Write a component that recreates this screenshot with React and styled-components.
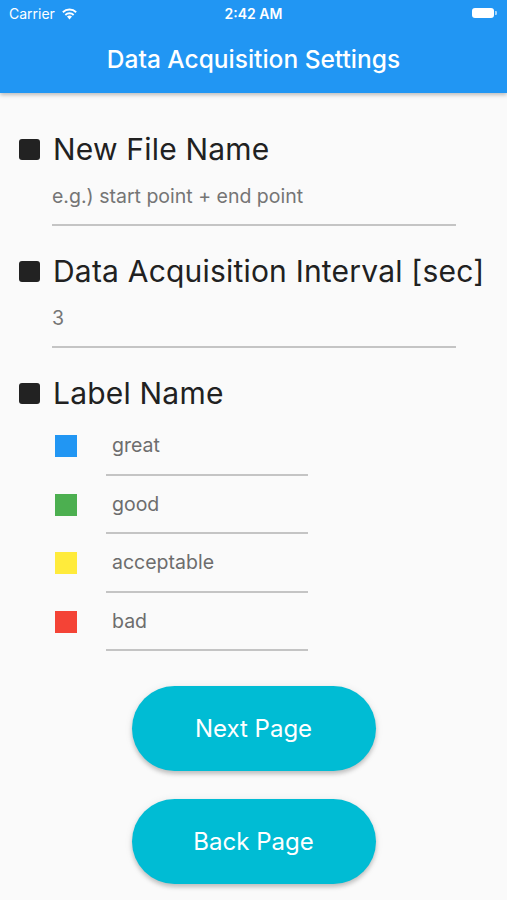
import React from "react";
import styled, { createGlobalStyle } from "styled-components";

const GlobalStyle = createGlobalStyle`
  html, body {
    margin: 0;
    padding: 0;
    background: #fafafa;
  }
  body {
    font-family: Inter, "Noto Sans", sans-serif;
    -webkit-font-smoothing: antialiased;
  }
`;

const Screen = styled.div`
  width: 507px;
  height: 900px;
  background: #fafafa;
  overflow: hidden;
`;

const AppBar = styled.header`
  background: #2196f3;
  height: 93px;
  box-shadow: 0 2px 4px rgba(0, 0, 0, 0.25);
  color: #fff;
  display: flex;
  flex-direction: column;
`;

const StatusBar = styled.div`
  height: 26px;
  display: grid;
  grid-template-columns: 1fr auto 1fr;
  align-items: center;
  padding: 0 9px;
  font-size: 14px;
  font-weight: 500;
`;

const Carrier = styled.div`
  display: flex;
  align-items: center;
  gap: 6px;
  font-weight: 400;
`;

const Clock = styled.div`
  font-weight: 600;
`;

const Battery = styled.div`
  justify-self: end;
  display: flex;
  align-items: center;
  gap: 1px;
  margin-right: 1px;
`;

const BatteryBody = styled.div`
  width: 22px;
  height: 10px;
  border-radius: 3px;
  background: #fff;
`;

const BatteryTip = styled.div`
  width: 2px;
  height: 4px;
  border-radius: 0 1px 1px 0;
  background: rgba(255, 255, 255, 0.6);
`;

const Title = styled.h1`
  flex: 1;
  margin: 0;
  display: flex;
  align-items: center;
  justify-content: center;
  font-size: 24.5px;
  font-weight: 500;
  padding-bottom: 1px;
`;

const Content = styled.main`
  padding: 24px 0 0 19px;
  display: flex;
  flex-direction: column;
`;

const Section = styled.section`
  display: flex;
  flex-direction: column;
  margin-bottom: ${(p) => p.gap || 0}px;
`;

const Heading = styled.h2`
  margin: 0;
  display: flex;
  align-items: center;
  gap: 13px;
  font-size: 30px;
  font-weight: 400;
  letter-spacing: 0.2px;
  color: #212121;
  height: 64px;
`;

const Bullet = styled.span`
  width: 21px;
  height: 21px;
  border-radius: 3px;
  background: #222;
  flex-shrink: 0;
`;

const Field = styled.div`
  margin-left: 33px;
  width: 404px;
  height: 45px;
  border-bottom: 2px solid #c4c4c4;
  box-sizing: border-box;
  display: flex;
  align-items: center;
  padding-bottom: 13px;
  font-size: 19.5px;
  color: #757575;
`;

const LabelList = styled.div`
  display: flex;
  flex-direction: column;
  margin-top: -8px;
`;

const LabelRow = styled.div`
  display: flex;
  align-items: center;
  margin-left: 36px;
  height: 58.6px;
`;

const Swatch = styled.span`
  width: 22px;
  height: 22px;
  background: ${(p) => p.color};
  flex-shrink: 0;
  margin-right: 29px;
`;

const LabelField = styled.div`
  width: 202px;
  height: 100%;
  box-sizing: border-box;
  border-bottom: 2px solid #c4c4c4;
  display: flex;
  align-items: center;
  padding: 0 0 0 6px;
  font-size: 19.5px;
  color: #6d6d6d;
`;

const Buttons = styled.div`
  display: flex;
  flex-direction: column;
  align-items: center;
  gap: 28px;
  margin: 35px 0 0 -19px;
`;

const PillButton = styled.button`
  width: 244px;
  height: 85px;
  border: none;
  border-radius: 43px;
  background: #00bcd4;
  color: #fff;
  font-family: Inter, "Noto Sans", sans-serif;
  font-size: 24px;
  font-weight: 400;
  box-shadow: 0 3px 4px rgba(0, 0, 0, 0.2), 0 1px 8px rgba(0, 0, 0, 0.08);
  cursor: pointer;
`;

const labels = [
  { name: "great", color: "#2196f3" },
  { name: "good", color: "#4caf50" },
  { name: "acceptable", color: "#ffeb3b" },
  { name: "bad", color: "#f44336" },
];

const Wifi = () => (
  <svg width="17" height="13" viewBox="0 0 17 13">
    <path d="M8.5 12.5 L11 9.6 A3.8 3.8 0 0 0 6 9.6 Z" fill="#fff" />
    <path d="M3.7 7.3 A6.8 6.8 0 0 1 13.3 7.3 L12 8.7 A5 5 0 0 0 5 8.7 Z" fill="#fff" />
    <path d="M1.2 4.6 A10.4 10.4 0 0 1 15.8 4.6 L14.5 6 A8.6 8.6 0 0 0 2.5 6 Z" fill="#fff" />
  </svg>
);

const App = () => {
  return (
    <Screen>
      <GlobalStyle />
      <AppBar>
        <StatusBar>
          <Carrier>
            Carrier
            <Wifi />
          </Carrier>
          <Clock>2:42 AM</Clock>
          <Battery>
            <BatteryBody />
            <BatteryTip />
          </Battery>
        </StatusBar>
        <Title>Data Acquisition Settings</Title>
      </AppBar>
      <Content>
        <Section gap={13}>
          <Heading>
            <Bullet />
            New File Name
          </Heading>
          <Field>e.g.) start point + end point</Field>
        </Section>
        <Section gap={13}>
          <Heading>
            <Bullet />
            Data Acquisition Interval [sec]
          </Heading>
          <Field>3</Field>
        </Section>
        <Section>
          <Heading>
            <Bullet />
            Label Name
          </Heading>
          <LabelList>
            {labels.map((l) => (
              <LabelRow key={l.name}>
                <Swatch color={l.color} />
                <LabelField>{l.name}</LabelField>
              </LabelRow>
            ))}
          </LabelList>
        </Section>
        <Buttons>
          <PillButton>Next Page</PillButton>
          <PillButton>Back Page</PillButton>
        </Buttons>
      </Content>
    </Screen>
  );
};

export default App;
